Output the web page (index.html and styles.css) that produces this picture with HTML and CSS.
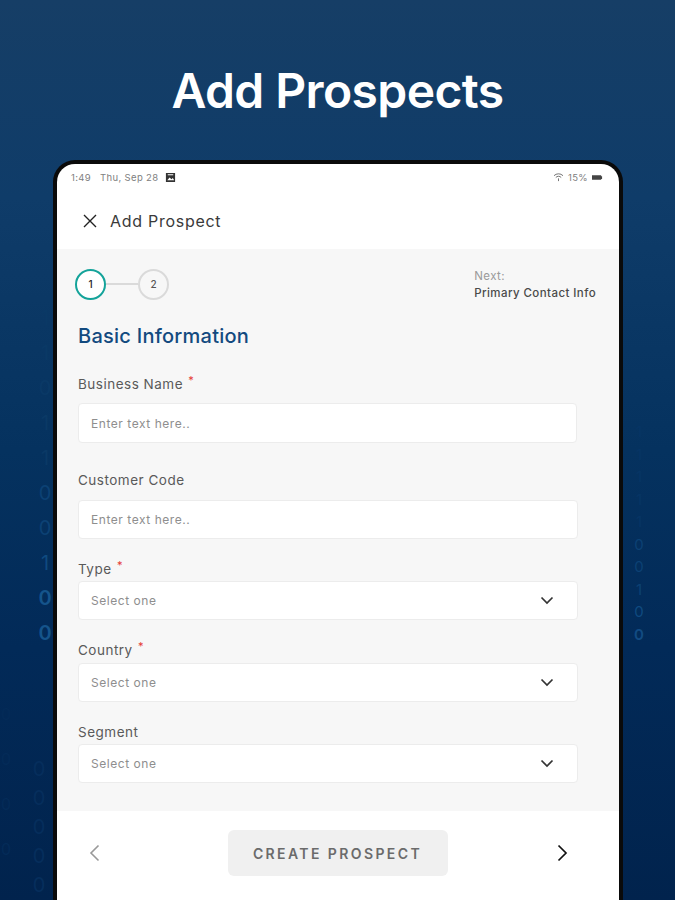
FILE: index.html
```html
<!DOCTYPE html>
<html lang="en">
<head>
<meta charset="utf-8">
<title>Add Prospects</title>
<link rel="stylesheet" href="styles.css">
</head>
<body>
<main class="page">
  <div class="digits digits-left" aria-hidden="true">
    <span>1</span><span>1</span><span>0</span><span>1</span><span>1</span><span class="m1">0</span><span class="m1">0</span><span class="b1">1</span><span class="b2">0</span><span class="b2">0</span>
  </div>
  <div class="digits digits-right" aria-hidden="true">
    <span>1</span><span>1</span><span>1</span><span>1</span><span>1</span><span class="m1">0</span><span class="m1">0</span><span class="m1">1</span><span class="b1">0</span><span class="b2">0</span>
  </div>
  <div class="digits digits-low" aria-hidden="true">
    <span>0</span><span>0</span><span>0</span><span>0</span><span>0</span>
  </div>
  <div class="digits digits-edge" aria-hidden="true">
    <span>0</span><span>0</span><span>0</span><span>0</span>
  </div>
  <h1 class="hero">Add Prospects</h1>
  <section class="device">
    <div class="screen">
      <div class="status">
        <div class="status-left">
          <span>1:49</span><span>Thu, Sep 28</span>
          <svg class="status-img" viewBox="0 0 12 12" width="11" height="11"><path d="M1 1h10v10H1z" fill="#333"/><path d="M2.5 9l2.5-3 2 2 1.5-1.5L10 9z" fill="#fff"/><path d="M3 2.5h6v1H3z" fill="#fff"/></svg>
        </div>
        <div class="status-right">
          <svg viewBox="0 0 12 10" width="11" height="9" fill="none" stroke="#666" stroke-width="1"><path d="M1 3a7 7 0 0 1 10 0M3 5a4 4 0 0 1 6 0M6 9V6"/></svg>
          <span>15%</span>
          <svg viewBox="0 0 12 7" width="11" height="7"><path d="M0 1h10v1h1v3h-1v1H0z" fill="#444"/></svg>
        </div>
      </div>
      <header class="topbar">
        <svg class="close" viewBox="0 0 14 14" width="14" height="14"><path d="M1 1l12 12M13 1L1 13" stroke="#222" stroke-width="1.4" fill="none"/></svg>
        <span class="topbar-title">Add Prospect</span>
      </header>
      <div class="body">
        <div class="steps-row">
          <div class="steps">
            <span class="step step-on">1</span>
            <span class="step-line"></span>
            <span class="step">2</span>
          </div>
          <div class="next">
            <div class="next-label">Next:</div>
            <div class="next-value">Primary Contact Info</div>
          </div>
        </div>
        <h2 class="section">Basic Information</h2>
        <div class="field field-first">
          <label class="label">Business Name <sup class="req">*</sup></label>
          <div class="control control-short">Enter text here..</div>
        </div>
        <div class="field field-second">
          <label class="label">Customer Code</label>
          <div class="control">Enter text here..</div>
        </div>
        <div class="field field-tight">
          <label class="label">Type <sup class="req">*</sup></label>
          <div class="control">Select one<svg class="chev" viewBox="0 0 14 9" width="14" height="9"><path d="M1.5 1.5L7 7l5.5-5.5" stroke="#333" stroke-width="1.7" fill="none"/></svg></div>
        </div>
        <div class="field field-tight">
          <label class="label">Country <sup class="req">*</sup></label>
          <div class="control">Select one<svg class="chev" viewBox="0 0 14 9" width="14" height="9"><path d="M1.5 1.5L7 7l5.5-5.5" stroke="#333" stroke-width="1.7" fill="none"/></svg></div>
        </div>
        <div class="field field-tight">
          <label class="label">Segment</label>
          <div class="control">Select one<svg class="chev" viewBox="0 0 14 9" width="14" height="9"><path d="M1.5 1.5L7 7l5.5-5.5" stroke="#333" stroke-width="1.7" fill="none"/></svg></div>
        </div>
      </div>
      <footer class="footer">
        <svg viewBox="0 0 12 18" width="12" height="18"><path d="M10.5 1.5L3 9l7.5 7.5" stroke="#999" stroke-width="1.6" fill="none"/></svg>
        <div class="create">CREATE PROSPECT</div>
        <svg viewBox="0 0 12 18" width="12" height="18"><path d="M1.5 1.5L9 9l-7.5 7.5" stroke="#111" stroke-width="1.7" fill="none"/></svg>
      </footer>
    </div>
  </section>
</main>
</body>
</html>
```

FILE: styles.css
```css
* { box-sizing: border-box; }
html, body { margin: 0; padding: 0; }
body { font-family: Inter, "Liberation Sans", sans-serif; }
.page {
  position: relative;
  width: 675px;
  height: 900px;
  overflow: hidden;
  background: linear-gradient(180deg, #163e66 0%, #0f3c69 22%, #05325f 50%, #022a58 72%, #01234d 100%);
}
.hero {
  position: relative;
  margin: 0;
  height: 160px;
  padding-top: 60px;
  text-align: center;
  color: #fff;
  font-size: 48px;
  line-height: 62px;
  font-weight: 600;
  letter-spacing: -0.6px;
}
.digits {
  position: absolute;
  display: flex;
  flex-direction: column;
  align-items: center;
  font-size: 20px;
  line-height: 35px;
  color: #0a3966;
}
.digits .m1 { color: #0c4174; }
.digits .b1 { color: #0f4a80; }
.digits .b2 { color: #15548b; font-weight: 600; }
.digits-left { left: 36px; top: 301px; width: 18px; }
.digits-right { left: 630px; top: 421px; width: 18px; font-size: 15px; line-height: 22.5px; color: #073565; }
.digits-right .b2 { color: #124b82; }
.digits-low { left: 30px; top: 755px; width: 18px; line-height: 29px; color: #062e5c; }
.digits-edge { left: 0; top: 692px; width: 12px; font-size: 16px; line-height: 45px; color: #042b58; }
.device {
  position: relative;
  width: 570px;
  height: 780px;
  margin-left: 53px;
  padding: 4px;
  background: #0a0a0a;
  border-radius: 22px 22px 0 0;
}
.screen {
  height: 100%;
  display: flex;
  flex-direction: column;
  background: #fff;
  border-radius: 18px 18px 0 0;
  overflow: hidden;
}
.status {
  height: 26px;
  padding: 0 16px 0 14px;
  display: flex;
  align-items: center;
  justify-content: space-between;
  font-size: 9.5px;
  letter-spacing: 0.35px;
  color: #808080;
}
.status-left, .status-right { display: flex; align-items: center; }
.status-left { gap: 9px; }
.status-right { gap: 4px; }
.status-img { margin-left: -2px; }
.topbar {
  height: 59px;
  padding: 2px 0 0 26px;
  display: flex;
  align-items: center;
  gap: 13px;
}
.topbar-title { font-size: 16px; letter-spacing: 0.72px; color: #3a3a3a; }
.body {
  height: 562px;
  padding: 19px 0 0 21px;
  background: #f7f7f7;
}
.steps-row {
  display: flex;
  justify-content: space-between;
  height: 32px;
  padding-right: 23px;
}
.steps { display: flex; align-items: center; margin-left: -3px; }
.step {
  width: 31px;
  height: 31px;
  display: flex;
  align-items: center;
  justify-content: center;
  border: 2px solid #dadada;
  border-radius: 50%;
  font-size: 10px;
  font-weight: 500;
  color: #555;
}
.step-on { border-color: #14a39a; color: #222; background: #fff; }
.step-line { width: 32px; height: 2px; background: #dadada; }
.next { font-size: 11.5px; line-height: 17px; letter-spacing: 0.42px; }
.next-label { color: #9a9a9a; }
.next-value { color: #4a4a4a; font-weight: 500; }
.section {
  margin: 23px 0 0;
  font-size: 20px;
  line-height: 26px;
  font-weight: 500;
  letter-spacing: 0.25px;
  color: #134a7f;
}
.label {
  display: block;
  height: 20px;
  font-size: 13.5px;
  line-height: 20px;
  letter-spacing: 0.5px;
  color: #5a5a5a;
}
.req { color: #e53935; font-size: 11px; line-height: 0; margin-left: 1px; }
.control {
  width: 500px;
  height: 39px;
  padding: 0 23px 0 12px;
  display: flex;
  align-items: center;
  justify-content: space-between;
  background: #fff;
  border: 1px solid #ececec;
  border-radius: 4px;
  font-size: 12px;
  letter-spacing: 0.55px;
  color: #8e8e8e;
}
.control-short { width: 499px; height: 40px; }
.field-first { margin-top: 25px; }
.field-first .label { margin-bottom: 9px; }
.field-second { margin-top: 27px; }
.field-second .label { margin-bottom: 10px; }
.field-tight { margin-top: 20px; }
.field-tight .label { margin-bottom: 3px; }
.field-second + .field-tight .label { margin-bottom: 2px; }
.field-tight:last-child .label { margin-bottom: 2px; }
.footer {
  height: 89px;
  padding: 0 50px 5px 31px;
  display: flex;
  align-items: center;
  justify-content: space-between;
  background: #fff;
}
.create {
  width: 220px;
  height: 46px;
  margin-left: 18px;
  display: flex;
  align-items: center;
  justify-content: center;
  background: #f0f0f0;
  border-radius: 6px;
  font-size: 14px;
  font-weight: 600;
  letter-spacing: 2.4px;
  color: #6b6b6b;
}
```
